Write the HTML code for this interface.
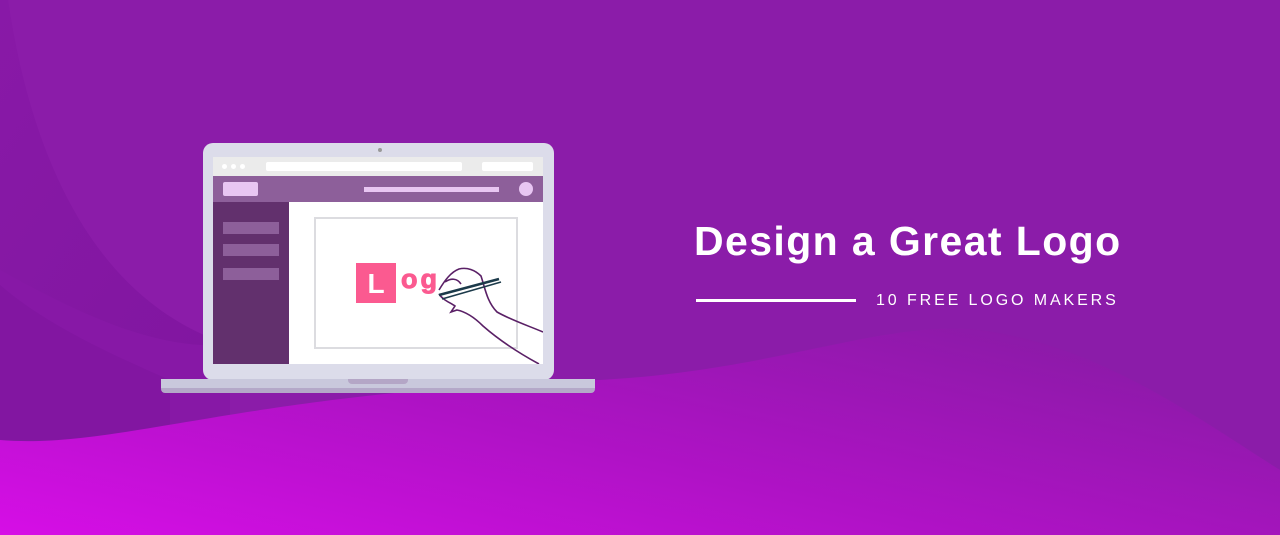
<!DOCTYPE html>
<html><head><style>
body{margin:0;width:1280px;height:535px;overflow:hidden;background:#8b1ca9;font-family:"Liberation Sans",sans-serif;position:relative}
.abs{position:absolute}
</style></head><body>
<svg class="abs" style="left:0;top:0" width="1280" height="535">
<defs>
<linearGradient id="w" x1="0" y1="1" x2="1" y2="0.3">
<stop offset="0" stop-color="#d60ee6"/><stop offset="0.5" stop-color="#b012c6"/><stop offset="1" stop-color="#8c1aa8"/>
</linearGradient>
<linearGradient id="d" x1="0" y1="0" x2="1" y2="1">
<stop offset="0" stop-color="#8a1aa8"/><stop offset="1" stop-color="#7a149a"/>
</linearGradient>
</defs>
<path d="M0,0 L8,0 C30,150 90,300 230,345 L230,535 L0,535 Z" fill="#8718a6"/>
<path d="M0,0 L8,0 C30,150 90,300 230,345 C160,350 90,320 0,270 Z" fill="url(#d)" opacity="0.5"/>
<path d="M0,285 C40,320 100,350 170,380 L170,535 L0,535 Z" fill="#7e169e" opacity="0.6"/>
<path d="M0,440 C120,450 250,390 600,380 C780,370 880,320 980,330 C1100,345 1200,420 1280,470 L1280,535 L0,535 Z" fill="url(#w)"/>
</svg>
<div class="abs" style="left:203px;top:143px;width:351px;height:237px;background:#dcdcea;border-radius:10px"></div>
<div class="abs" style="left:378px;top:148px;width:4px;height:4px;border-radius:2px;background:#999"></div>
<div class="abs" style="left:161px;top:379px;width:434px;height:9px;background:#c9c8dc"></div>
<div class="abs" style="left:161px;top:388px;width:434px;height:5px;background:#b4a8c8;border-radius:0 0 4px 4px"></div>
<div class="abs" style="left:348px;top:379px;width:60px;height:5px;background:#b4a6c6;border-radius:0 0 4px 4px"></div>
<div class="abs" style="left:213px;top:157px;width:330px;height:19px;background:#ebebeb"></div>
<div class="abs" style="left:222px;top:164px;width:5px;height:5px;border-radius:3px;background:#fff"></div>
<div class="abs" style="left:231px;top:164px;width:5px;height:5px;border-radius:3px;background:#fff"></div>
<div class="abs" style="left:240px;top:164px;width:5px;height:5px;border-radius:3px;background:#fff"></div>
<div class="abs" style="left:266px;top:162px;width:196px;height:9px;border-radius:2px;background:#fff"></div>
<div class="abs" style="left:482px;top:162px;width:51px;height:9px;border-radius:2px;background:#fff"></div>
<div class="abs" style="left:213px;top:176px;width:330px;height:26px;background:#8d5f9a"></div>
<div class="abs" style="left:223px;top:182px;width:35px;height:14px;border-radius:2px;background:#e8c6f2"></div>
<div class="abs" style="left:364px;top:187px;width:135px;height:5px;background:#e8c6f2"></div>
<div class="abs" style="left:519px;top:182px;width:14px;height:14px;border-radius:7px;background:#e8c6f2"></div>
<div class="abs" style="left:213px;top:202px;width:76px;height:162px;background:#62306d"></div>
<div class="abs" style="left:223px;top:222px;width:56px;height:12px;background:#8d5f9a"></div>
<div class="abs" style="left:223px;top:244px;width:56px;height:12px;background:#8d5f9a"></div>
<div class="abs" style="left:223px;top:268px;width:56px;height:12px;background:#8d5f9a"></div>
<div class="abs" style="left:289px;top:202px;width:254px;height:162px;background:#fff;overflow:hidden">
<div class="abs" style="left:25px;top:15px;width:200px;height:128px;border:2px solid #dcdce0"></div>
<div class="abs" style="left:67px;top:61px;width:40px;height:40px;background:#fb5a90;color:#fff;font-weight:bold;font-size:28px;text-align:center;line-height:42px">L</div>
<div class="abs" style="left:112px;top:62px;color:#fb5a90;font-weight:900;font-size:27px;letter-spacing:3px;-webkit-text-stroke:1px #fb5a90">og</div>
<svg class="abs" style="left:0;top:0" width="254" height="162" fill="none" stroke="#5a2066" stroke-width="1.6">
<path d="M150,88 C156,78 162,70 170,67 C178,65 186,68 192,74 C196,86 198,100 208,110 C222,118 240,124 254,130"/>
<path d="M150,92 C154,98 160,100 166,104 L162,110 L168,108 C178,110 186,116 194,124 C210,138 228,150 250,162"/>
<path d="M156,80 C162,76 168,76 172,82"/>
<path d="M150,93 L210,77" stroke="#1c3a4a" stroke-width="2.5"/>
<path d="M153,97 L212,80" stroke="#1c3a4a"/>
</svg>
</div>
<div class="abs" style="left:694px;top:218px;color:#fff;font-weight:bold;font-size:41px;letter-spacing:1.4px;white-space:nowrap">Design a Great Logo</div>
<div class="abs" style="left:696px;top:299px;width:160px;height:3px;background:#fff"></div>
<div class="abs" style="left:876px;top:292px;color:#fff;font-size:16px;letter-spacing:2.9px;white-space:nowrap">10 FREE LOGO MAKERS</div>
</body></html>
